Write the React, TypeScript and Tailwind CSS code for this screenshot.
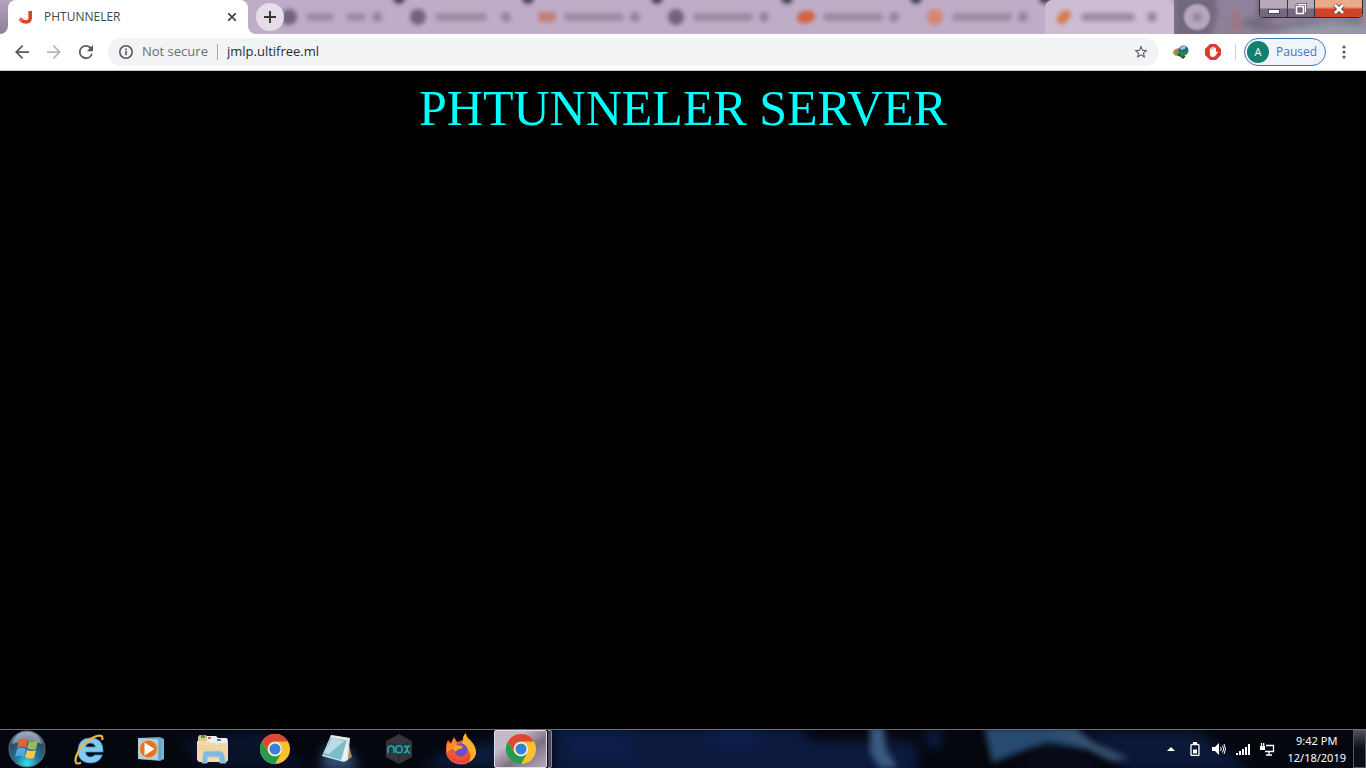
import type { ReactNode } from 'react';
import { clsx } from 'clsx';

type BackgroundTab = {
  name: string;
  icon: string;
  bars: string[];
  current?: boolean;
};

const DARK_ICON = 'size-4 rounded-full bg-[#6f637e]';

const backgroundTabs: BackgroundTab[] = [
  { name: 'Tab 2', icon: DARK_ICON, bars: ['w-7', 'w-5'] },
  { name: 'Tab 3', icon: DARK_ICON, bars: ['w-[52px]'] },
  { name: 'Tab 4', icon: 'h-2.5 w-[18px] rounded-sm bg-[#c37f72]', bars: ['w-[60px]'] },
  { name: 'Tab 5', icon: DARK_ICON, bars: ['w-[60px]'] },
  { name: 'Tab 6', icon: 'h-3 w-[18px] -rotate-12 rounded-full bg-[#cf6240]', bars: ['w-[60px]'] },
  { name: 'Tab 7', icon: 'size-4 rounded-full bg-[#d48670]', bars: ['w-[60px]'] },
  { name: 'Tab 8', icon: 'h-2.5 w-4 -rotate-45 rounded-full bg-[#d87a4c]', bars: ['w-[54px]'], current: true },
];

const StripTab = ({ tab }: { tab: BackgroundTab }) => (
  <button
    aria-label={tab.name}
    className={clsx(
      'relative flex h-full min-w-0 flex-1 items-center pl-2.5',
      tab.current && 'rounded-t-lg bg-[#cdbdd3]'
    )}
  >
    <span className="flex w-[18px] shrink-0 justify-center">
      <span className={clsx('blur-[2px]', tab.icon)} />
    </span>
    <span className="ml-2 flex w-[66px] shrink-0 gap-3">
      {tab.bars.map((bar) => (
        <span key={bar} className={clsx('h-2 rounded-full bg-[#9b8ba4] blur-[2px]', bar)} />
      ))}
    </span>
    <span className="size-2.5 rounded-full bg-[#9484a0] blur-[2px]" />
    {!tab.current && (
      <span className="absolute -top-2 -right-1.5 size-3 rounded-full bg-[#454456] blur-[2px]" />
    )}
  </button>
);

const JoomlaMark = () => (
  <svg viewBox="0 0 16 16" className="size-4" fill="none" stroke="#db4426" strokeWidth="3.600">
    <path d="M12.200 2v7q0 4-4.200 4Q5 13 3 10.800" />
    <path d="M1.800 9.600l2.400 2.400" stroke="#e8673a" />
  </svg>
);

const WindowControls = () => (
  <div className="flex h-[18px] overflow-hidden rounded-b-[5px] border border-t-0 border-[#2f2938] shadow-[inset_0_0_0_1px_#c8bdcc]">
    <button aria-label="Minimize" className="flex w-7 items-center justify-center border-r border-[#393241] bg-linear-to-b from-[#b7a9b9] from-45% to-[#75677d] to-55%">
      <svg viewBox="0 0 12 12" className="mt-1 size-3">
        <rect x=".5" y="4.500" width="11" height="4" fill="#fff" stroke="#52485d" />
      </svg>
    </button>
    <button aria-label="Restore" className="flex w-[27px] items-center justify-center border-r border-[#393241] bg-linear-to-b from-[#b7a9b9] from-45% to-[#75677d] to-55%">
      <svg viewBox="0 0 12 12" className="size-3" fill="none">
        <path d="M3.500 3V1.500h7v7H9" stroke="#51485b" strokeWidth="3" />
        <path d="M3.500 3V1.500h7v7H9" stroke="#fff" strokeWidth="1.500" />
        <rect x="1.500" y="3.500" width="7" height="7" fill="#75677d" stroke="#51485b" strokeWidth="3" />
        <rect x="1.500" y="3.500" width="7" height="7" stroke="#fff" strokeWidth="1.800" />
      </svg>
    </button>
    <button aria-label="Close" className="flex w-[47px] items-center justify-center bg-linear-to-b from-[#eba88a] from-40% to-[#cf4426] to-55%">
      <svg viewBox="0 0 12 12" className="size-3" fill="none">
        <path d="M2 2l8 8M10 2l-8 8" stroke="#5c3437" strokeWidth="4.500" />
        <path d="M2 2l8 8M10 2l-8 8" stroke="#fff" strokeWidth="2.800" />
      </svg>
    </button>
  </div>
);

const TabStrip = () => (
  <div className="relative flex h-[34px] overflow-hidden bg-[#bfadc8]">
    <span className="absolute inset-y-0 left-0 w-6 bg-linear-to-b from-[#b6a3bf] to-[#8f7f9c]" />
    <div className="relative z-10 ml-2 flex h-full w-60 shrink-0 items-center rounded-t-lg bg-white pr-2.5 pl-2.5">
      <svg viewBox="0 0 8 8" className="absolute bottom-0 -left-2 size-2" fill="#fff">
        <path d="M8 0v8H0a8 8 0 0 0 8-8" />
      </svg>
      <svg viewBox="0 0 8 8" className="absolute -right-2 bottom-0 size-2" fill="#fff">
        <path d="M0 0v8h8a8 8 0 0 1-8-8" />
      </svg>
      <JoomlaMark />
      <span className="ml-2.5 flex-1 text-[12px] text-[#45474a]">PHTUNNELER</span>
      <button aria-label="Close tab" className="flex size-3 items-center justify-center">
        <svg viewBox="0 0 8 8" className="size-2" stroke="#3c4043" strokeWidth="1.600">
          <path d="M0 0l8 8M8 0L0 8" />
        </svg>
      </button>
    </div>
    <div className="relative z-10 flex w-[22px] shrink-0 items-center pl-2">
      <button aria-label="New tab" className="flex size-7 shrink-0 items-center justify-center rounded-full bg-[#e5dde8]">
        <svg viewBox="0 0 12 12" className="size-3" stroke="#34363a" strokeWidth="2">
          <path d="M6 0v12M0 6h12" />
        </svg>
      </button>
    </div>
    <div className="flex min-w-0 flex-1">
      {backgroundTabs.map((tab) => (
        <StripTab key={tab.name} tab={tab} />
      ))}
    </div>
    <div className="relative flex w-[192px] shrink-0 items-start justify-between overflow-hidden bg-[#8f8199] pr-[3px]">
      <svg viewBox="0 0 192 34" preserveAspectRatio="none" className="absolute inset-0 size-full">
        <g className="blur-[3px]">
          <path d="M0-4h44v18l-8 24H0z" fill="#6f687e" />
          <path d="M40 0h48v20l-40 2z" fill="#8e829c" />
          <path d="M60 12l4 18" stroke="#a5716c" strokeWidth="6" />
          <path d="M66 22q12-8 26 0t36-1l28 3 40-8v6l-52 8H84z" fill="#6f6a7f" />
          <path d="M108 30q26-8 88-6v14H96z" fill="#9699a9" />
          <path d="M84 0h16v18H84z" fill="#6a5c75" />
          <path d="M188 0h8v22h-8z" fill="#a98c96" />
        </g>
      </svg>
      <span className="relative mt-1 ml-2.5 flex size-[26px] items-center justify-center rounded-full bg-[#b7a7bf] blur-[1px]">
        <span className="size-2 rounded-full bg-[#887a94] blur-[2px]" />
      </span>
      <div className="relative">
        <WindowControls />
      </div>
    </div>
  </div>
);

const ToolbarButton = ({ label, children }: { label: string; children: ReactNode }) => (
  <button aria-label={label} className="flex h-7 w-8 shrink-0 items-center justify-center">
    {children}
  </button>
);

const Toolbar = () => (
  <div className="flex h-[37px] items-center border-b border-[#c9ccd0] bg-white pr-2.5 pl-1.5">
    <ToolbarButton label="Back">
      <svg viewBox="4 4 16 16" className="size-3.5" fill="#5a5763">
        <path d="M20 11H7.830l5.590-5.590L12 4l-8 8 8 8 1.410-1.410L7.830 13H20z" />
      </svg>
    </ToolbarButton>
    <ToolbarButton label="Forward">
      <svg viewBox="4 4 16 16" className="size-3.5" fill="#b9b4be">
        <path d="M12 4l-1.410 1.410L16.170 11H4v2h12.170l-5.580 5.590L12 20l8-8z" />
      </svg>
    </ToolbarButton>
    <ToolbarButton label="Reload">
      <svg viewBox="4 4 16 16" className="size-3.5" fill="#5a5763">
        <path d="M17.650 6.350A7.960 7.960 0 0 0 12 4a8 8 0 1 0 7.730 10h-2.080A6 6 0 1 1 12 6c1.660 0 3.140.690 4.220 1.780L13 11h7V4z" />
      </svg>
    </ToolbarButton>
    <div className="ml-1.5 flex h-7 min-w-0 flex-1 items-center rounded-full bg-[#f1f3f4] pr-2.5 pl-2.5">
      <button className="flex items-center gap-2 text-[13px] text-[#6b6e73]">
        <svg viewBox="0 0 16 16" className="size-4" fill="none" stroke="#5a5763" strokeWidth="1.600">
          <circle cx="8" cy="8" r="6.200" />
          <path d="M8 7v4.200M8 4.500v1.700" />
        </svg>
        Not secure
      </button>
      <span className="mx-[9px] h-4 w-px bg-[#a5a8ac]" />
      <input
        type="text"
        aria-label="Address"
        defaultValue="jmlp.ultifree.ml"
        className="min-w-0 flex-1 bg-transparent text-[13px] text-[#2b2d31] outline-none"
      />
      <button aria-label="Bookmark">
        <svg viewBox="0 0 24 24" className="size-4" fill="#5a5763">
          <path d="M22 9.240l-7.190-.620L12 2 9.190 8.630 2 9.240l5.460 4.730L5.820 21 12 17.270 18.180 21l-1.630-7.030zM12 15.400l-3.760 2.270 1-4.280-3.320-2.880 4.380-.380L12 6.100l1.710 4.040 4.380.380-3.320 2.880 1 4.280z" />
        </svg>
      </button>
    </div>
    <div className="ml-1.5 flex items-center">
      <ToolbarButton label="Download manager">
        <svg viewBox="0 0 16 16" className="size-4">
          <ellipse cx="5" cy="8.500" rx="5" ry="3.800" fill="#b9a456" />
          <path d="M1 7q3-4 6-2l-2 3-4 1z" fill="#e16b42" />
          <path d="M2 9q3-3 5-1v4q-4 0-5-3" fill="#45a957" />
          <circle cx="10.500" cy="6.500" r="5" fill="#285b9d" />
          <path d="M7 4q3-4 6-2l-1 3-4 1z" fill="#8dc1e6" />
          <path d="M6 8l3-1 2 1 4-3-1 5-3 2v2l-5-4z" fill="#218c35" />
          <path d="M5 10l5 4 2-2" fill="none" stroke="#273140" strokeWidth="1.400" />
        </svg>
      </ToolbarButton>
      <ToolbarButton label="Ad blocker">
        <svg viewBox="0 0 16 16" className="size-4">
          <path d="M5 0h6l5 5v6l-5 5H5l-5-5V5z" fill="#da3b2b" />
          <path d="M5 6v4q0 3 3 3 2 0 3-2l2-3-1-.6-1.400 1.200V6" fill="#fff" />
          <path d="M5.500 9V5M7.200 9V3.500M8.900 9V3.500M10.300 9V4.500" stroke="#fff" strokeWidth="1.300" strokeLinecap="round" />
        </svg>
      </ToolbarButton>
      <span className="mx-1.5 h-4 w-px bg-[#cdcfd2]" />
      <button className="ml-0.5 flex h-7 w-[82px] items-center rounded-full border border-[#3e78bd] bg-[#f1f5fb] pl-0.5 text-[12px] text-[#4474c8]">
        <span className="mr-[7px] flex size-[22px] items-center justify-center rounded-full bg-[#13806f] text-[11px] text-white">A</span>
        Paused
      </button>
      <button aria-label="Menu" className="ml-1.5 flex h-7 w-6 items-center justify-center">
        <svg viewBox="0 0 4 14" className="h-3.5 w-1" fill="#58565f">
          <circle cx="2" cy="2" r="1.500" />
          <circle cx="2" cy="7" r="1.500" />
          <circle cx="2" cy="12" r="1.500" />
        </svg>
      </button>
    </div>
  </div>
);

const StartOrb = () => (
  <svg viewBox="0 0 38 38" className="size-[38px]">
    <defs>
      <radialGradient id="orb" cx=".5" cy=".9" r=".9">
        <stop offset="0" stopColor="#35e1f1" />
        <stop offset=".35" stopColor="#20799b" />
        <stop offset=".75" stopColor="#2d4866" />
        <stop offset="1" stopColor="#8d9dae" />
      </radialGradient>
    </defs>
    <circle cx="19" cy="19" r="18" fill="url(#orb)" stroke="#596e83" />
    <path d="M4 14Q8 2 19 2t15 12q-14-6-30 0" fill="#b2bfce" opacity=".6" />
    <path d="M11 10q5-3 9 0l-2 8q-4-3-9 0z" fill="#e26235" />
    <path d="M21 11q4 2 9-1l-2 9q-5 2-9-1z" fill="#9bb85c" />
    <path d="M9 19q4-3 9 0l-2 8q-4-3-9 0z" fill="#55a8de" />
    <path d="M19 20q4 2 9 0l-2 8q-5 2-9-1z" fill="#fbc64c" />
  </svg>
);

const ExplorerE = () => (
  <svg viewBox="0 0 32 32" className="size-8" fill="none">
    <path
      d="M30 19H12.500q.5 5 5 5 3 0 4.200-2h7.600q-3 8-12 8Q5 29.500 5 17.500 5.500 5 17.500 5 30.500 5 30 19M12.500 14h10q-.8-4-5-4t-5 4"
      fill="#7fcbf2"
      fillRule="evenodd"
      stroke="#3f9ad2"
      strokeWidth=".8"
    />
    <path d="M8 29.500q-6 3-5.500-3Q4 17 14 8.500 24 1 28.500 3q1.500 1.500.5 4" stroke="#f0b53b" strokeWidth="2.200" />
  </svg>
);

const MediaPlayer = () => (
  <svg viewBox="0 0 28 28" className="size-7">
    <path d="M1 3l22-1 4 2v20l-4 2-22-2z" fill="#63a3c5" />
    <path d="M1 3l20 1v21L1 24z" fill="#a6d2e7" />
    <path d="M21 4h6v20l-6 1z" fill="#79b3d0" />
    <path d="M23 4v21" stroke="#4e8eb4" strokeWidth=".8" />
    <circle cx="11.500" cy="14" r="9" fill="#e57526" stroke="#f5c18b" />
    <path d="M7.500 7.500v13l10-6.500z" fill="#fff" />
  </svg>
);

const Folder = () => (
  <svg viewBox="0 0 34 30" className="h-[30px] w-[34px]">
    <path d="M2 4q0-3 3-3h5l2 3h17q3 0 3 3v20H2z" fill="#e3c48c" />
    <path d="M11 2h9l2 2h9v5H11z" fill="#eef1f3" />
    <path d="M5 1h4v3H5z" fill="#3aa345" />
    <path d="M12 3h3v2h-3z" fill="#d8664f" />
    <path d="M21 5h4v2h-4z" fill="#4977c8" />
    <path d="M1 7h12l2 2h17v17l-2 2H3l-2-2z" fill="#f4d9a6" />
    <path d="M3 12h27M3 15h27" stroke="#e6c48a" strokeWidth=".8" />
    <path d="M6 29l1-9q0-3 3-3h14q3 0 4 3l2 9h-6l-1-6H12l-1 6z" fill="#82badb" stroke="#a9d4e9" strokeWidth=".8" />
  </svg>
);

const Chrome = () => (
  <svg viewBox="0 0 30 30" className="size-[30px]">
    <circle cx="15" cy="15" r="15" fill="#fac12b" />
    <path d="M2 7.500A15 15 0 0 1 28 7.500H15a7.500 7.500 0 0 0-6.500 11.250z" fill="#dc4838" />
    <path d="M2 7.500a15 15 0 0 0 13 22.500l6.500-11.250A7.500 7.500 0 0 1 8.500 18.750z" fill="#259a52" />
    <circle cx="15" cy="15" r="7" fill="#f1f3f5" />
    <circle cx="15" cy="15" r="5.500" fill="#377fd8" />
  </svg>
);

const Notepad = () => (
  <svg viewBox="0 0 32 32" className="size-8">
    <path d="M27 8l4 16-5 3z" fill="#a88b50" />
    <path d="M10 2l19 3-2 22-4 2-22-6z" fill="#d5e7ec" />
    <path d="M10 4l16 3-6 20L2 22z" fill="#81bccb" />
    <path d="M11 5l12 3L8 21l-5-1z" fill="#b9dde2" />
    <path d="M26 7l-5 20 5-1z" fill="#edf2f2" />
    <path d="M10 3.500l18 3" stroke="#edf0f0" strokeWidth="3" strokeDasharray="1.500 1" />
  </svg>
);

const Nox = () => (
  <svg viewBox="0 0 30 32" className="h-8 w-[30px]" fill="none">
    <path d="M15 1l13 7v16l-13 7-13-7V8z" fill="#34353d" />
    <path d="M3 8l12 6 12-6M15 22v9" stroke="#24252c" />
    <g stroke="#16aebb" strokeWidth="1.500">
      <path d="M4 20v-4q0-3 3-3t3 3v4" />
      <rect x="12" y="13" width="6" height="6.500" rx="2" />
      <path d="M20 13q3 0 3 3t3 4M26 13q-3 0-3 3t-3 4" />
    </g>
  </svg>
);

const Firefox = () => (
  <svg viewBox="0 0 32 32" className="size-8">
    <path d="M3 7l3 3 3-6 3 5 6-2q0-5 3-6 0 3 4 6 6 6 6 12A15 13 0 0 1 1 18Q1 11 3 7" fill="#ed5535" />
    <path d="M18 7q0-5 3-7 0 4 4 7 6 6 6 13-1 6-7 9 3-5 0-11l-7-8z" fill="#fbb02c" />
    <path d="M2 9l4 2 3-6 3 5-2 6q-6 0-8 4-1-6 0-11" fill="#f68c2c" />
    <circle cx="16" cy="17" r="6.500" fill="#6c4dce" />
    <path d="M9 13q6-2 9 1-2 3-5 2-1 3-4 2z" fill="#fda32d" />
    <path d="M3 20q3 7 13 7 8 0 9-7 1 9-9 10Q6 30 3 20" fill="#e8413c" />
  </svg>
);

const pinned = [
  { name: 'Internet Explorer', icon: <ExplorerE /> },
  { name: 'Media Player', icon: <MediaPlayer /> },
  { name: 'File Explorer', icon: <Folder /> },
  { name: 'Google Chrome', icon: <Chrome /> },
  { name: 'Notepad', icon: <Notepad /> },
  { name: 'Nox', icon: <Nox /> },
  { name: 'Firefox', icon: <Firefox /> },
];

const Wallpaper = () => (
  <svg viewBox="0 0 1366 38" preserveAspectRatio="none" className="absolute inset-0 size-full">
    <rect width="1366" height="38" fill="#05070f" />
    <g className="blur-[6px]">
      <path d="M180 10l80-10 50 38H200z" fill="#08132a" />
      <path d="M325 18l22 2 12 20h-38z" fill="#34557f" />
      <path d="M420 38l30-18 50-10v28z" fill="#0c1c3c" />
      <path d="M552-4h250l130 20v30H552z" fill="#0b1a3d" />
      <path d="M560 0h70v30h-60zM710-2h50v20h-50z" fill="#0e1d4a" />
      <path d="M800-4h75v16l-65-2zM920 12l70 5v25h-75z" fill="#04060d" />
      <path d="M926 0h14v18h-10z" fill="#102153" />
      <path d="M1085 0h110l60 42h-130z" fill="#0b1838" />
    </g>
    <g className="blur-[3px]">
      <path d="M870-3h14l2 22 12 19h-18l-10-15z" fill="#3a5a80" />
      <path d="M984-3h92l16 14-8 8-36-6-20 6-36 14z" fill="#264a70" />
      <path d="M1046-2l30 6 54 25-18 2-32-15z" fill="#385472" />
      <path d="M1030 24l20-9 44 14 8 12h-86z" fill="#070b16" />
    </g>
  </svg>
);

const Tray = () => (
  <div className="ml-auto flex items-center text-white">
    <button aria-label="Show hidden icons" className="flex w-6 justify-center">
      <svg viewBox="0 0 8 4" className="h-1 w-2" fill="#fff">
        <path d="M4 0l4 4H0z" />
      </svg>
    </button>
    <button aria-label="Battery" className="flex w-6 justify-center">
      <svg viewBox="0 0 10 14" className="h-3.5 w-2.5" fill="none" stroke="#fff">
        <path d="M3 1h4" strokeWidth="2" />
        <rect x="1" y="2.500" width="8" height="11" rx="1" strokeWidth="1.300" />
        <path d="M3 7.500h4v4H3z" fill="#fff" stroke="none" />
      </svg>
    </button>
    <button aria-label="Volume" className="flex w-6 justify-center">
      <svg viewBox="0 0 14 12" className="h-3 w-3.5" fill="none" stroke="#fff">
        <path d="M0 4h3l4-4v12L3 8H0z" fill="#fff" stroke="none" />
        <path d="M8.500 4q1.500 2 0 4M10.500 2.500q2.500 3.500 0 7M12 1q3 5 0 10" />
      </svg>
    </button>
    <button aria-label="Network signal" className="flex w-6 justify-center">
      <svg viewBox="0 0 14 11" className="h-[11px] w-3.5" fill="#fff">
        <path d="M0 9h2v2H0zM3 7h2v4H3zM6 5h2v6H6zM9 3h2v8H9zM12 0h2v11h-2z" />
      </svg>
    </button>
    <button aria-label="Network" className="flex w-6 justify-center">
      <svg viewBox="0 0 15 13" className="h-[13px] w-[15px]" fill="none" stroke="#fff" strokeWidth="1.300">
        <path d="M6 2.500h7.500v6H5M9 9v3M6 12h6" />
        <path d="M0 3h5v4H0z" fill="#fff" stroke="none" />
        <path d="M1.500 3V0M3.700 3V0" />
      </svg>
    </button>
    <button className="mr-[7px] ml-2 text-center text-[11px] leading-[17px]">
      <span className="block">9:42 PM</span>
      <span className="block">12/18/2019</span>
    </button>
    <button aria-label="Show desktop" className="h-[38px] w-[13px] border border-[#525661] bg-linear-to-b from-[#4d505a] to-[#0b0e17] to-50%" />
  </div>
);

const Taskbar = () => (
  <footer className="relative h-[39px] overflow-hidden border-t border-[#6c6d78] font-['Noto_Sans',sans-serif]">
    <Wallpaper />
    <div className="relative flex h-[38px] items-center">
      <button aria-label="Start" className="flex w-[58px] shrink-0 pl-2">
        <StartOrb />
      </button>
      {pinned.map((app) => (
        <button key={app.name} aria-label={app.name} className="flex w-[62px] shrink-0 items-center justify-center">
          {app.icon}
        </button>
      ))}
      <button
        aria-label="Google Chrome, PHTUNNELER"
        className="mr-px ml-0.5 flex h-[38px] w-[53px] shrink-0 items-center justify-center rounded-xs border border-[#e3dde6] bg-linear-to-br from-[#c3b9c7] from-30% via-[#7c7384] via-60% to-[#b5aabb]"
      >
        <Chrome />
      </button>
      <span className="h-[38px] w-1 shrink-0 rounded-r-xs border border-l-0 border-[#8c8894] bg-[#4b4857]" />
      <Tray />
    </div>
  </footer>
);

const App = () => {
  return (
    <div className="flex min-h-screen flex-col bg-black font-['Open_Sans',sans-serif]">
      <header>
        <TabStrip />
        <Toolbar />
      </header>
      <main className="flex-1 pt-2 text-center">
        <h1 className="font-['Liberation_Serif',serif] text-[50px] leading-[58px] text-[#00ffff]">
          PHTUNNELER SERVER
        </h1>
      </main>
      <Taskbar />
    </div>
  );
};

export default App;
